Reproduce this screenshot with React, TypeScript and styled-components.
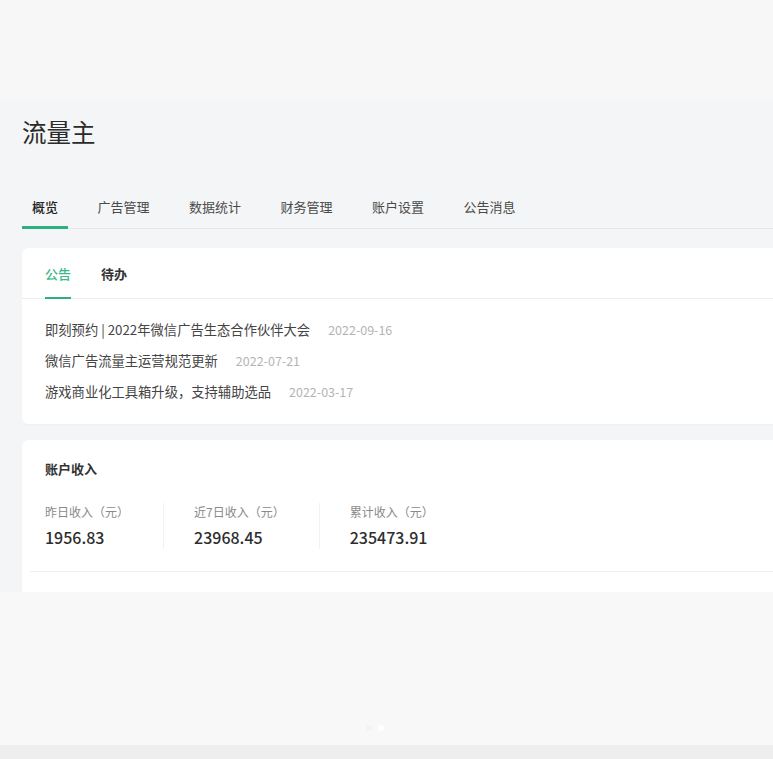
import React from "react";
import styled, { createGlobalStyle } from "styled-components";

const GlobalStyle = createGlobalStyle`
  html, body { margin: 0; padding: 0; }
  body {
    background: #f8f8f8;
    overflow: hidden;
    font-family: "Noto Sans CJK SC", "Noto Sans", sans-serif;
    color: #333;
  }
`;

const Page = styled.div`
  display: flex;
  flex-direction: column;
  height: 759px;
  width: 773px;
`;

const TopSpace = styled.div`
  height: 100px;
  background: #f7f7f7;
  flex: none;
`;

const AppArea = styled.div`
  height: 492px;
  flex: none;
  background: #f4f5f6;
  padding-left: 22px;
  overflow: hidden;
  box-sizing: border-box;
`;

const Title = styled.h1`
  margin: 0;
  padding-top: 17px;
  font-size: 24.5px;
  line-height: 30px;
  font-weight: 400;
  color: #2b2b2b;
`;

const Nav = styled.nav`
  display: flex;
  gap: 19.5px;
  margin-top: 50px;
  border-bottom: 1px solid #e6e7e9;
  margin-right: -20px;
`;

const NavTab = styled.div<{ $active?: boolean }>`
  padding: 0 10px 9px;
  font-size: 13px;
  line-height: 20px;
  color: ${(p) => (p.$active ? "#222" : "#4a4a4a")};
  font-weight: ${(p) => (p.$active ? 500 : 400)};
  border-bottom: 3px solid ${(p) => (p.$active ? "#2fae7f" : "transparent")};
  margin-bottom: -1px;
`;

const Card = styled.section`
  background: #fff;
  border-radius: 6px;
  margin-right: -20px;
  box-shadow: 0 1px 2px rgba(0, 0, 0, 0.03);
`;

const NoticeCard = styled(Card)`
  margin-top: 19px;
  height: 176px;
  box-sizing: border-box;
`;

const SubTabs = styled.div`
  display: flex;
  gap: 30px;
  padding: 0 23px;
  border-bottom: 1px solid #eeeeee;
`;

const SubTab = styled.div<{ $active?: boolean }>`
  padding: 16px 0 13px;
  font-size: 13px;
  line-height: 20px;
  font-weight: ${(p) => (p.$active ? 500 : 700)};
  color: ${(p) => (p.$active ? "#3bb98a" : "#333")};
  border-bottom: 2px solid ${(p) => (p.$active ? "#2fae7f" : "transparent")};
  margin-bottom: -1px;
`;

const NoticeList = styled.ul`
  list-style: none;
  margin: 0;
  padding: 15px 23px 17px;
`;

const NoticeItem = styled.li`
  display: flex;
  align-items: baseline;
  line-height: 31px;
`;

const NoticeText = styled.span`
  font-size: 13.3px;
  color: #444;
`;

const NoticeDate = styled.span`
  font-size: 12.5px;
  color: #b4b4b4;
  margin-left: 18px;
`;

const IncomeCard = styled(Card)`
  margin-top: 16px;
  height: 200px;
  padding-top: 20px;
  box-sizing: border-box;
`;

const CardTitle = styled.h2`
  margin: 0;
  padding-left: 23px;
  font-size: 13px;
  line-height: 18px;
  font-weight: 700;
  color: #333;
`;

const Stats = styled.div`
  display: flex;
  margin-top: 25px;
  padding-bottom: 22px;
  border-bottom: 1px solid #efefef;
  margin-left: 8px;
  padding-left: 15px;
`;

const Stat = styled.div<{ $first?: boolean; $last?: boolean }>`
  padding-left: ${(p) => (p.$first ? "0" : "30px")};
  padding-right: ${(p) => (p.$last ? "0" : "34px")};
  border-right: ${(p) => (p.$last ? "none" : "1px solid #f2f2f2")};
`;

const StatLabel = styled.div`
  font-size: 12px;
  line-height: 18px;
  color: #8a8a8a;
`;

const StatValue = styled.div`
  margin-top: 4px;
  font-size: 16px;
  line-height: 24px;
  font-weight: 500;
  color: #2e2e2e;
`;

const BottomArea = styled.div`
  height: 153px;
  flex: none;
  background: #f8f8f8;
  display: flex;
  align-items: flex-end;
  padding-left: 366px;
  padding-bottom: 14px;
  box-sizing: border-box;
  gap: 6px;
`;

const Dot = styled.span<{ $active?: boolean }>`
  width: 6px;
  height: 6px;
  border-radius: 50%;
  background: ${(p) => (p.$active ? "#ffffff" : "#f3f3f3")};
`;

const BottomBar = styled.div`
  flex: 1;
  background: #eeeeee;
`;

const tabs = ["概览", "广告管理", "数据统计", "财务管理", "账户设置", "公告消息"];

const notices = [
  { text: "即刻预约 | 2022年微信广告生态合作伙伴大会", date: "2022-09-16" },
  { text: "微信广告流量主运营规范更新", date: "2022-07-21" },
  { text: "游戏商业化工具箱升级，支持辅助选品", date: "2022-03-17" },
];

const stats = [
  { label: "昨日收入（元）", value: "1956.83" },
  { label: "近7日收入（元）", value: "23968.45" },
  { label: "累计收入（元）", value: "235473.91" },
];

export default function App() {
  return (
    <>
      <GlobalStyle />
      <Page>
        <TopSpace />
        <AppArea>
          <Title>流量主</Title>
          <Nav>
            {tabs.map((t, i) => (
              <NavTab key={t} $active={i === 0}>
                {t}
              </NavTab>
            ))}
          </Nav>
          <NoticeCard>
            <SubTabs>
              <SubTab $active>公告</SubTab>
              <SubTab>待办</SubTab>
            </SubTabs>
            <NoticeList>
              {notices.map((n) => (
                <NoticeItem key={n.text}>
                  <NoticeText>{n.text}</NoticeText>
                  <NoticeDate>{n.date}</NoticeDate>
                </NoticeItem>
              ))}
            </NoticeList>
          </NoticeCard>
          <IncomeCard>
            <CardTitle>账户收入</CardTitle>
            <Stats>
              {stats.map((s, i) => (
                <Stat key={s.label} $first={i === 0} $last={i === stats.length - 1}>
                  <StatLabel>{s.label}</StatLabel>
                  <StatValue>{s.value}</StatValue>
                </Stat>
              ))}
            </Stats>
          </IncomeCard>
        </AppArea>
        <BottomArea>
          <Dot />
          <Dot $active />
        </BottomArea>
        <BottomBar />
      </Page>
    </>
  );
}
